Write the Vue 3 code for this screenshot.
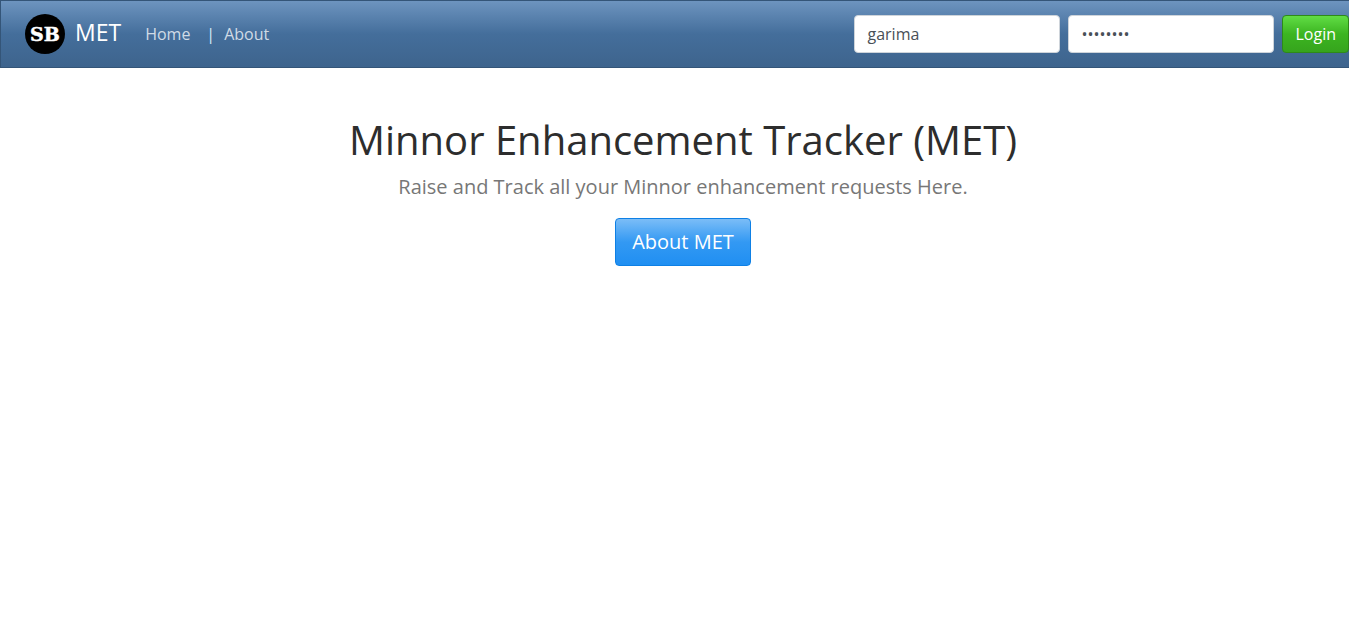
<script setup>
import { ref } from 'vue'

const username = ref('garima')
const password = ref('password')
</script>

<template>
  <div class="page">
    <header class="navbar">
      <a class="brand" href="#">
        <svg class="logo" viewBox="0 0 40 40" aria-hidden="true">
          <circle cx="20" cy="20" r="20" />
          <text x="20" y="27" text-anchor="middle">SB</text>
        </svg>
        <span class="brand-name">MET</span>
      </a>
      <nav class="links">
        <a href="#">Home</a>
        <span class="divider">|</span>
        <a href="#">About</a>
      </nav>
      <form class="login" @submit.prevent>
        <input v-model="username" type="text" aria-label="Username" autocomplete="off" />
        <input v-model="password" type="password" aria-label="Password" autocomplete="off" />
        <button class="btn btn-login" type="submit">Login</button>
      </form>
    </header>
    <main class="hero">
      <h1>Minnor Enhancement Tracker (MET)</h1>
      <p>Raise and Track all your Minnor enhancement requests Here.</p>
      <button class="btn btn-about" type="button">About MET</button>
    </main>
  </div>
</template>

<style>
body {
  background: #fff;
}
</style>

<style scoped>
.page,
.page * {
  box-sizing: border-box;
}
.page {
  font-family: "Open Sans", sans-serif;
  font-size: 16px;
  line-height: 24px;
  color: #777;
}
.navbar {
  display: flex;
  align-items: center;
  min-height: 68px;
  padding-left: 24px;
  border: 1px solid #345578;
  border-right: 0;
  background: linear-gradient(#6d94bf, #446e9b 50%, #3e648d);
}
.navbar a {
  text-decoration: none;
}
.brand {
  display: flex;
  align-items: center;
  gap: 10px;
  color: #fff;
}
.logo {
  width: 40px;
  height: 40px;
}
.logo text {
  fill: #fff;
  stroke: #fff;
  stroke-width: 0.5;
  font: bold 19px "DejaVu Serif", serif;
}
.brand-name {
  padding-bottom: 4px;
  font-size: 23px;
  line-height: 32px;
}
.links {
  display: flex;
  margin-left: 24px;
}
.links a {
  color: #d0dbe6;
}
.divider {
  margin: 0 9px 0 16px;
  color: #d5eef8;
}
.login {
  display: flex;
  gap: 8px;
  margin-left: auto;
}
.login input {
  width: 206px;
  height: 38px;
  padding: 6px 12px;
  border: 1px solid #ced4da;
  border-radius: 4px;
  outline: 0;
  background: #fff;
  color: #495057;
  font: inherit;
}
.btn {
  border: 1px solid;
  border-radius: 4px;
  color: #fff;
  font-family: inherit;
  cursor: pointer;
}
.btn-login {
  padding: 6px 12px;
  border-color: #2e8a19;
  background: linear-gradient(#61dd45, #3cb521 50%, #36a41d);
  font-size: 16px;
  line-height: 24px;
}
.hero {
  padding: 48px 0 48px 17px;
  text-align: center;
}
h1 {
  margin: 0 0 8px;
  color: #2d2d2d;
  font-size: 40px;
  font-weight: 400;
  line-height: 48px;
}
p {
  margin: 0 0 16px;
  font-size: 20px;
  line-height: 30px;
}
.btn-about {
  padding: 8px 16px;
  border-color: #0e80e5;
  background: linear-gradient(#7bbdf7, #3399f3 50%, #208ff2);
  font-size: 20px;
  line-height: 30px;
}
</style>
